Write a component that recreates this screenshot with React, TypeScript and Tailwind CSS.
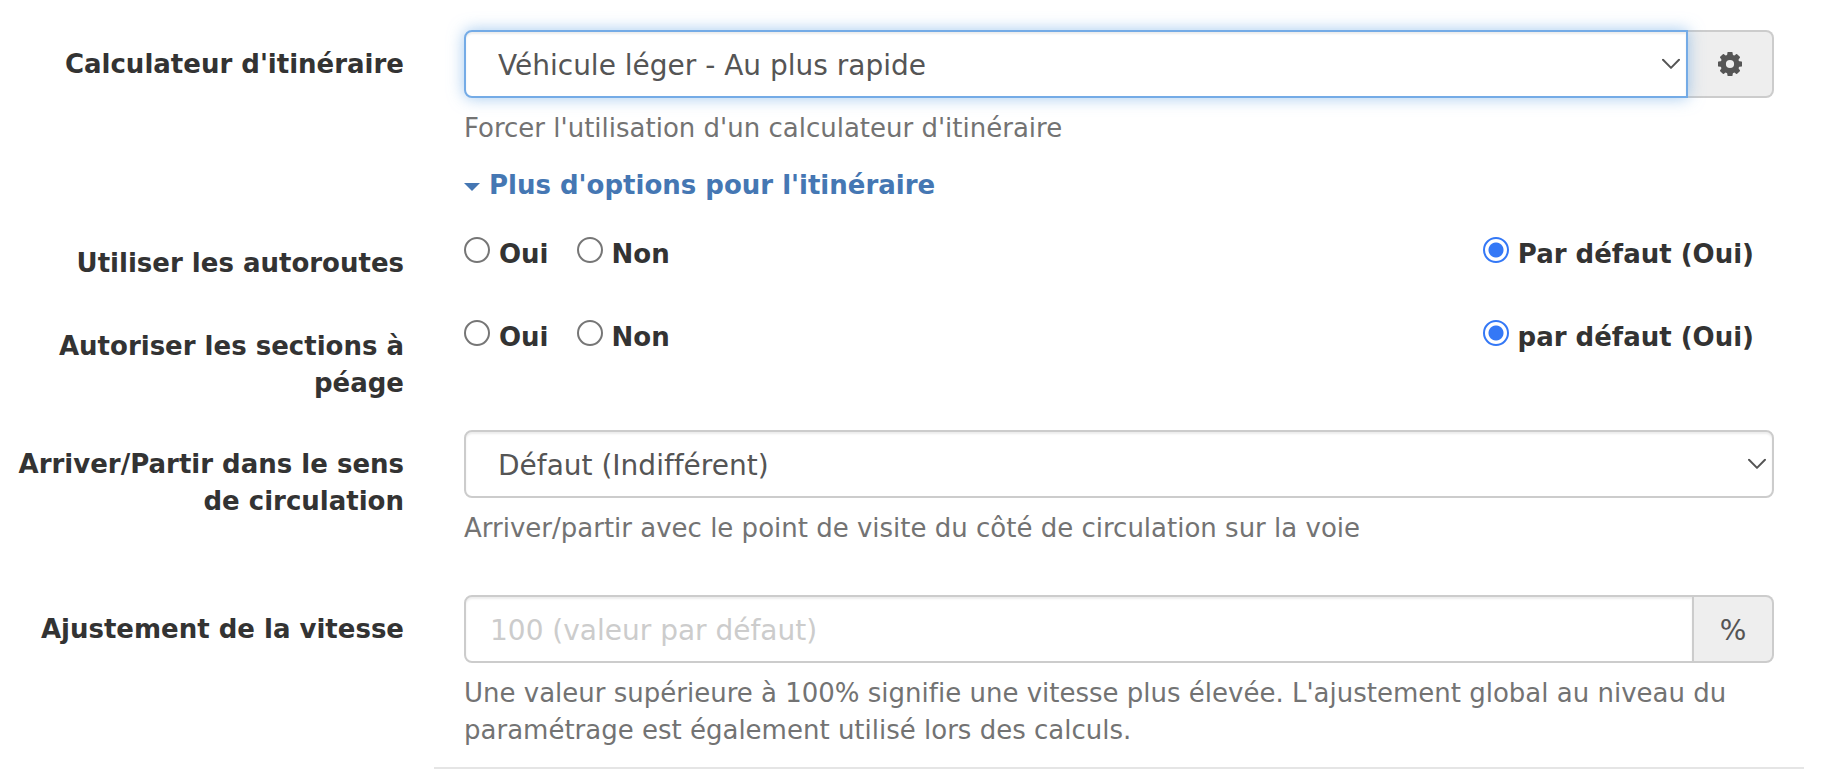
import React, { useState } from 'react';

type FieldRowProps = {
  label: string;
  htmlFor?: string;
  labelId?: string;
  className?: string;
  children: React.ReactNode;
};

function FieldRow({ label, htmlFor, labelId, className = '', children }: FieldRowProps) {
  const labelClass =
    'block pt-[16px] pl-[7px] text-right text-[26px] leading-[37px] font-bold text-[#333]';
  return (
    <div className={`grid grid-cols-[404fr_1310fr] gap-x-[60px] ${className}`}>
      {htmlFor ? (
        <label htmlFor={htmlFor} className={labelClass}>
          {label}
        </label>
      ) : (
        <span id={labelId} className={labelClass}>
          {label}
        </span>
      )}
      <div className="min-w-0">{children}</div>
    </div>
  );
}

function Help({ children }: { children: React.ReactNode }) {
  return <p className="mt-[12px] text-[26px] leading-[37px] text-[#737373]">{children}</p>;
}

function Chevron() {
  return (
    <svg
      viewBox="0 0 18 11"
      className="pointer-events-none absolute top-1/2 right-[8px] h-[11px] w-[18px] -translate-y-1/2"
      fill="none"
      stroke="#555"
      strokeWidth="2"
      strokeLinecap="round"
      strokeLinejoin="round"
      aria-hidden="true"
    >
      <path d="M1 1.2 9 9.4 17 1.2" />
    </svg>
  );
}

function Cog() {
  return (
    <svg viewBox="-12 -12 24 24" className="h-[24px] w-[24px]" fill="none" aria-hidden="true">
      <circle r="6.8" stroke="#555" strokeWidth="5.4" />
      {[0, 45, 90, 135, 180, 225, 270, 315].map((angle) => (
        <path
          key={angle}
          transform={`rotate(${angle})`}
          d="M-3.1 -8 -2.5 -11.5Q-2.4 -12 -1.9 -12H1.9Q2.4 -12 2.5 -11.5L3.1 -8Z"
          fill="#555"
        />
      ))}
    </svg>
  );
}

type RadioProps = {
  name: string;
  value: string;
  label: string;
  current: string;
  onSelect: (value: string) => void;
};

function Radio({ name, value, label, current, onSelect }: RadioProps) {
  return (
    <label className="flex items-start gap-[9px] text-[26px] leading-[37px] font-bold text-[#333]">
      <input
        type="radio"
        name={name}
        value={value}
        checked={current === value}
        onChange={() => onSelect(value)}
        className="mt-[1px] h-[26px] w-[26px] shrink-0 appearance-none rounded-full border-2 border-[#767676] bg-white checked:border-[#3478f6] checked:bg-[radial-gradient(circle,#3478f6_7px,#fff_8px)]"
      />
      {label}
    </label>
  );
}

function RadioRow({ name, labelId, defaultLabel }: { name: string; labelId: string; defaultLabel: string }) {
  const [current, setCurrent] = useState('default');
  return (
    <div role="radiogroup" aria-labelledby={labelId} className="flex items-start gap-[28px] pt-[7px] pr-[20px]">
      <Radio name={name} value="yes" label="Oui" current={current} onSelect={setCurrent} />
      <Radio name={name} value="no" label="Non" current={current} onSelect={setCurrent} />
      <div className="ml-auto">
        <Radio name={name} value="default" label={defaultLabel} current={current} onSelect={setCurrent} />
      </div>
    </div>
  );
}

const addon =
  'flex shrink-0 items-center justify-center rounded-r-[8px] border-2 border-l-0 border-[#ccc] bg-[#eee] text-[28px] text-[#555]';

export default function App() {
  return (
    <form
      onSubmit={(e) => e.preventDefault()}
      className="bg-white pt-[30px] pr-[54px] pb-[15px] font-['Verdana','DejaVu_Sans',sans-serif] [font-variant-ligatures:none]"
    >
      <FieldRow label="Calculateur d'itinéraire" htmlFor="router">
        <div className="flex">
          <div className="relative z-10 min-w-0 flex-1">
            <select
              id="router"
              className="block h-[68px] w-full appearance-none rounded-l-[8px] border-2 border-[#74abe6] bg-white pt-[4px] pr-[40px] pl-[32px] text-[28px] text-[#555] shadow-[inset_0_2px_2px_rgba(0,0,0,0.075),0_0_16px_rgba(102,165,228,0.6)] outline-none"
            >
              <option>Véhicule léger - Au plus rapide</option>
            </select>
            <Chevron />
          </div>
          <button type="button" aria-label="Paramètres" className={`${addon} w-[86px]`}>
            <Cog />
          </button>
        </div>
        <Help>Forcer l'utilisation d'un calculateur d'itinéraire</Help>
        <a
          href="#options"
          className="mt-[20px] inline-flex items-center gap-[9px] text-[26px] leading-[37px] font-bold text-[#4577b3]"
        >
          <svg viewBox="0 0 16 8" className="mt-[2px] h-[8px] w-[16px]" fill="currentColor" aria-hidden="true">
            <path d="M0 0H16L8 8Z" />
          </svg>
          Plus d'options pour l'itinéraire
        </a>
      </FieldRow>

      <div id="options">
        <FieldRow label="Utiliser les autoroutes" labelId="motorway" className="mt-[25px]">
          <RadioRow name="motorway" labelId="motorway" defaultLabel="Par défaut (Oui)" />
        </FieldRow>

        <FieldRow label="Autoriser les sections à péage" labelId="toll" className="mt-[30px]">
          <RadioRow name="toll" labelId="toll" defaultLabel="par défaut (Oui)" />
        </FieldRow>

        <FieldRow label="Arriver/Partir dans le sens de circulation" htmlFor="approach" className="mt-[28px]">
          <div className="relative">
            <select
              id="approach"
              className="block h-[68px] w-full appearance-none rounded-[8px] border-2 border-[#ccc] bg-white pt-[4px] pr-[40px] pl-[32px] text-[28px] text-[#555] shadow-[inset_0_2px_2px_rgba(0,0,0,0.075)] outline-none"
            >
              <option>Défaut (Indifférent)</option>
            </select>
            <Chevron />
          </div>
          <Help>Arriver/partir avec le point de visite du côté de circulation sur la voie</Help>
        </FieldRow>

        <FieldRow label="Ajustement de la vitesse" htmlFor="speed" className="mt-[48px]">
          <div className="flex">
            <input
              id="speed"
              type="text"
              placeholder="100 (valeur par défaut)"
              className="h-[68px] min-w-0 flex-1 rounded-l-[8px] border-2 border-[#ccc] bg-white px-[24px] pt-[2px] text-[28px] text-[#555] shadow-[inset_0_2px_2px_rgba(0,0,0,0.075)] outline-none placeholder:text-[#ccc]"
            />
            <span className={`${addon} w-[80px] pt-[4px]`}>%</span>
          </div>
          <Help>
            Une valeur supérieure à 100% signifie une vitesse plus élevée. L'ajustement global au niveau du paramétrage
            est également utilisé lors des calculs.
          </Help>
        </FieldRow>
      </div>

      <div className="grid grid-cols-[404fr_1310fr] gap-x-[60px] pt-[18px]">
        <hr className="col-start-2 -mx-[30px] border-t-2 border-[#e5e5e5]" />
      </div>
    </form>
  );
}
